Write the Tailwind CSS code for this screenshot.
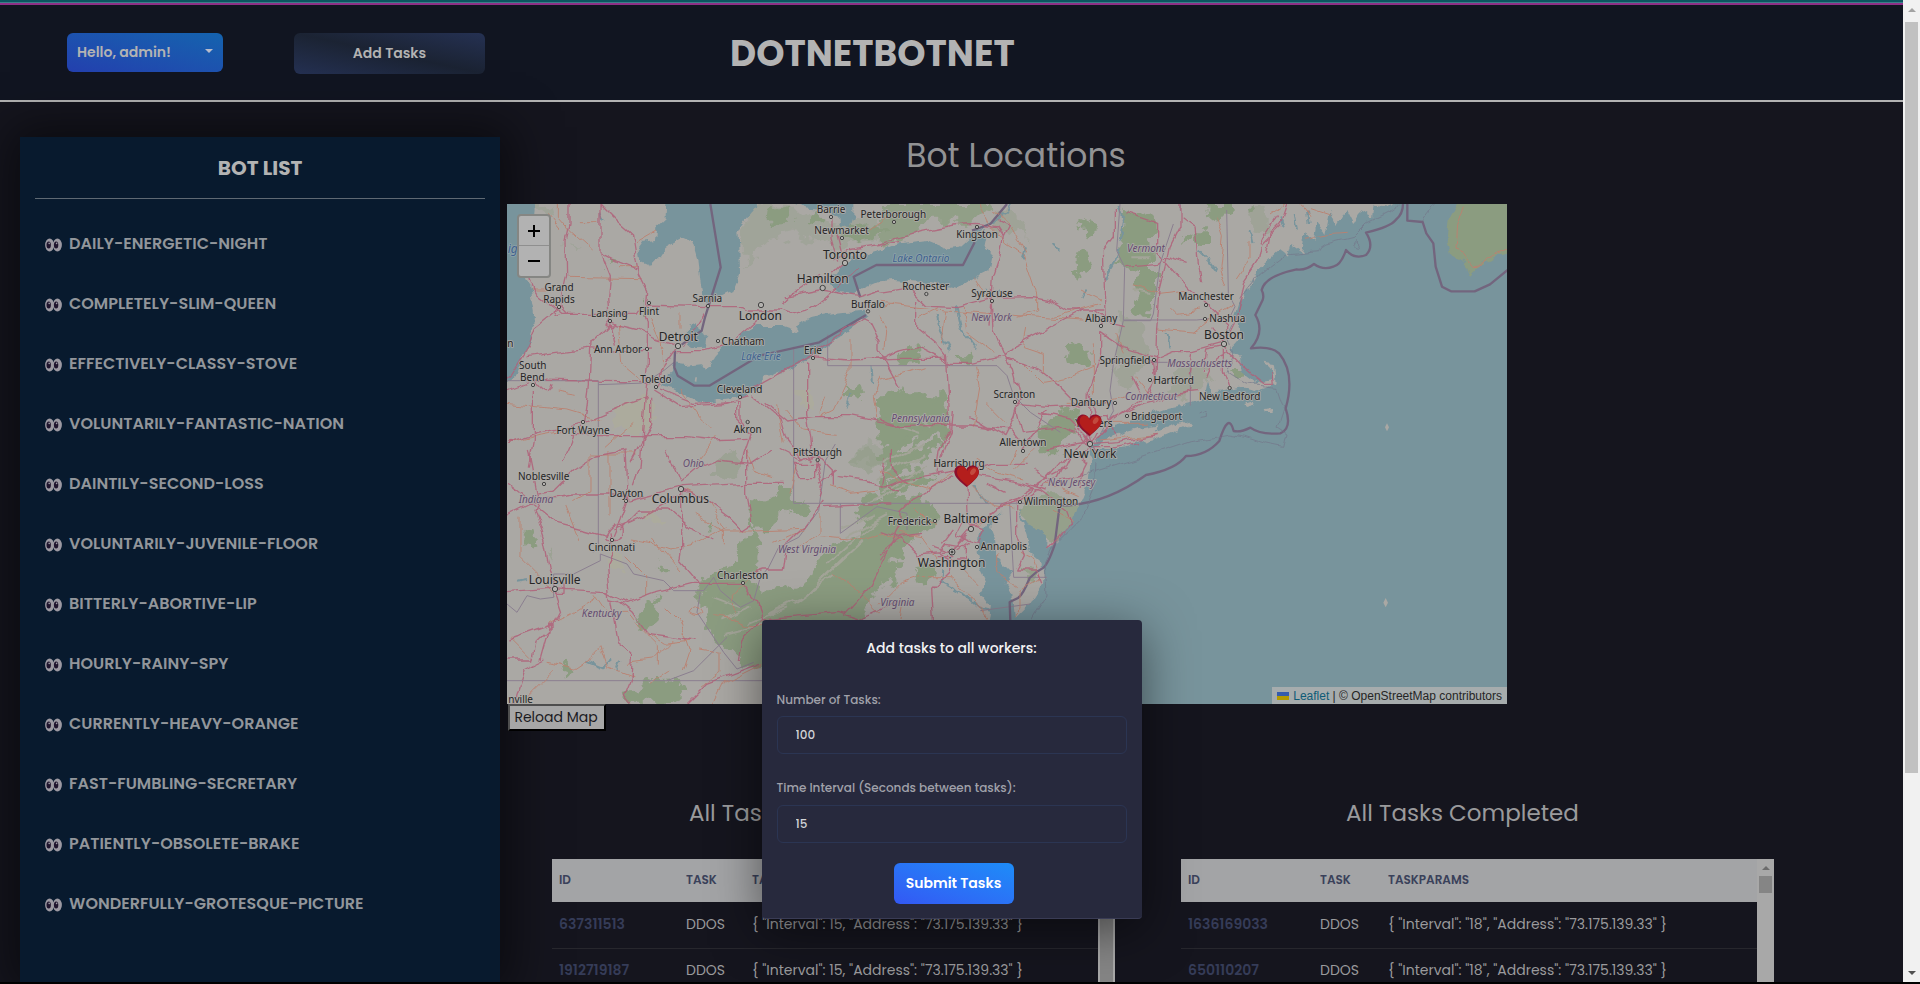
<!DOCTYPE html>
<html lang="en">
<head>
    <meta charset="UTF-8">
    <meta name="viewport" content="width=device-width, initial-scale=1.0">
    <title>DOTNETBOTNET</title>
    <script src="https://cdn.jsdelivr.net/npm/@tailwindcss/browser@4"></script>
</head>
<body class="h-screen flex flex-col overflow-hidden bg-black font-['Poppins','Inter',sans-serif] text-[#9a9a9c]">
    <div class="flex flex-1 min-h-0">
        <div class="relative flex flex-col flex-1 min-w-0 min-h-0 overflow-hidden bg-[#15151e]">
            <div class="h-[2px] shrink-0 bg-[#0b5560]"></div>
            <div class="h-px shrink-0 bg-[#3c7f88]"></div>
            <div class="h-[2px] shrink-0 bg-[#8f2f86]"></div>

            <header class="flex items-start shrink-0 h-[97px] pt-7 pl-[67px] bg-[#111521] border-b-2 border-[#b3b3b3]">
                <div class="relative">
                    <select id="userMenu" aria-label="User menu" class="appearance-none w-[156px] h-[39px] pl-[10px] pb-[2px] rounded-md text-sm font-semibold text-[#b3b3b3] bg-linear-to-bl from-[#1463ae] to-[#233fae]">
                        <option>Hello, admin!</option>
                    </select>
                    <svg class="absolute right-[10px] top-4 w-2 h-1 pointer-events-none" viewBox="0 0 8 4"><path d="M0 0h8L4 4z" fill="#b8bccb"/></svg>
                </div>
                <button id="addTasksBtn" class="ml-[71px] w-[191px] h-[41px] pb-[2px] rounded-md text-sm font-semibold text-[#b3b3b3] bg-linear-to-bl from-[#253153] via-[#1b2333] to-[#253153]">Add Tasks</button>
                <h1 class="ml-[245px] text-[36px] leading-[42px] font-bold text-[#b3b3b3]">DOTNETBOTNET</h1>
            </header>

            <div class="flex flex-1 min-h-0">
                <aside class="w-[25vw] shrink-0 mt-[35px] ml-5 px-[15px] bg-[#081a2e] shadow-[0_0_45px_10px_rgba(0,0,0,0.5)]">
                    <h2 class="h-[62px] pt-[17px] text-center text-xl leading-7 font-bold text-[#b3b3b3] border-b border-[#5f6973]">BOT LIST</h2>
                    <ul id="botList" class="pt-[15px] text-base font-semibold text-[#92969b]"></ul>
                </aside>

                <main class="flex-1 min-w-0 pl-[7px]">
                    <h2 class="w-[1018px] h-[102px] pt-[34px] text-center text-[33px] leading-10 text-[#929294]">Bot Locations</h2>

                    <div id="map" class="relative w-[1000px] h-[500px] overflow-hidden bg-[#aaa8a4]">
                        <svg class="w-full h-full font-['Noto_Sans',sans-serif]" viewBox="0 0 3000 1500" preserveAspectRatio="xMinYMin slice">
                            <defs>
                                <!-- breaks up straight edges so coast, woods and roads look surveyed -->
                                <filter id="rough" x="0" y="0" width="100%" height="100%" color-interpolation-filters="sRGB">
                                    <feTurbulence type="fractalNoise" baseFrequency=".02" numOctaves="4" seed="4"/>
                                    <feDisplacementMap in="SourceGraphic" scale="75" xChannelSelector="R" yChannelSelector="G"/>
                                </filter>
                                <filter id="coast" x="0" y="0" width="100%" height="100%" color-interpolation-filters="sRGB">
                                    <feTurbulence type="fractalNoise" baseFrequency=".03" numOctaves="3" seed="9"/>
                                    <feDisplacementMap in="SourceGraphic" scale="26" xChannelSelector="R" yChannelSelector="G"/>
                                </filter>
                                <filter id="wiggle" x="0" y="0" width="100%" height="100%" color-interpolation-filters="sRGB">
                                    <feTurbulence type="fractalNoise" baseFrequency=".015" numOctaves="3" seed="2"/>
                                    <feDisplacementMap in="SourceGraphic" scale="28" xChannelSelector="R" yChannelSelector="G"/>
                                </filter>
                            </defs>

                            <!-- woodland -->
                            <g fill="#8b9c80" filter="url(#rough)">
                                <path fill="none" d="M0 0h3000v1500H0z"/>
                                <g transform="translate(-21 -42)">
                                    <path d="M820 62l40-8 5 50-50 4zM930 80l40-14 10 30-30 20-20-5zM1030 130l70-30 60 10-30 30-70 20zM1035 585l50 5 10 30-60 5zM1130 640l50-30 160 0v130l-90 5-60 25-50-20zM305 212l30 4 25 12-40 6zM430 335l14 20-8 20z"/>
                                    <path opacity=".3" d="M720 110l60-60 110 0 120 50 90-30 40 20 0 60-140 20-120-40-80 20-70 70zM100 55l50-10 10 30-40 10zM190 160l50 10-10 20zM1040 800l60-40 80 10-60 60z"/>
                                </g>
                                <g transform="translate(1119 -42)">
                                    <path opacity=".8" d="M0 42h330l-60 50-110 0-60 40-100 30z"/>
                                    <path d="M0 622h60l10-30 20 30h110l10 60-50 40-120-10-20-30-20-5zM590 105l40-15 25 5-5 30-30 20-25-10zM575 210l25-20 40 15-10 30-30 22-25-20zM740 50l40 20 40 20 5 130 0 130-20 20-60-10 15-60 20-60-75-20 10-60zM910 130l30-10 0 30-30 15zM950 115h40v55l-20 5-20-20zM980 42h75v30l-70 10zM560 480l40-15 30 15-5 40-30 10-30-20zM500 690l50-40 40 20 0 50-60 70-50 0-10-60zM1100 60l20-10 5 20-20 10zM60 480l50-5 15 30-40 25-30-15zM230 495l40-5 15 25-30 10-20-10zM1050 540l30 0 10 20-20 10z"/>
                                    <path d="M0 800l40-50 60-15-60 65zM60 800l60-60 30-5-60 65zM110 800l50-45 40-10 0 20-60 35z"/>
                                    <path opacity=".35" d="M720 380l60 20 30 60-50 120-50 20-10-100zM900 520l60-10 40 60-80 60-50-40zM330 60l90 20 20 60-70-20zM1100 60l60-10 0 50-50 20z"/>
                                </g>
                                <g transform="translate(-21 738)">
                                    <path d="M755 150l90-30 35 0 10 30 30 0-10 35-50 10-40 30-60 10 30 30-15 50 0 50-35 10 60 50 60-10 60-20 40-60 20-50 110-20-20-60 30-60 110-10 60 20 50 50-60 50-90 90-100 180-200 90-30 40-100 0-60-60-40-40-30-60 0-100 35-30 60-30 20-60 30-30-10-50zM380 740l70-40 90-5 20 40-60 26h-110zM70 265l30-20 10 35-40 10zM395 520l60-70 30 30-10 50-50 10zM480 330l20 10 10 15-40 0zM620 235l20-15-5 25zM180 655l20-15 15 20-20 20zM740 610l120-80 20 60-90 60-50 10z"/>
                                    <path opacity=".45" d="M640 20l60-10 25 40-50 40-40-20zM130 300l20 0 10 30-20-10zM1040 20l60-20 60 20-60 50z"/>
                                </g>
                                <g transform="translate(1119 738)">
                                    <path d="M0 10l70-10 90 0-20 30-50 20-90 70zM0 180l40-20 90-10-60 60-70 60zM115 355l45-5 10 30-40 30zM0 330l30-10 30 30-20 60-40-10zM0 120l110-60 50 10-60 40-90 40z"/>
                                    <path opacity=".7" d="M435 160l60-15 90 0 25 20-20 60-60 60-90-60zM430 360l40-10 5 40-30 10z"/>
                                </g>
                            </g>
                            <!-- ridges through the Appalachians -->
                            <g fill="none" stroke="#a3a498" stroke-width="6" filter="url(#wiggle)">
                                <path stroke="none" d="M0 0h3000v1500H0z"/>
                                <path d="M1000 970l100-40M1010 1000l130-70M960 1080l150-130M940 1130l130-120M900 1170l110-110M860 1200l120-90M780 1230l100-50M720 1260l120-50M640 1250l90-40M1100 820l160-70M1130 860l130-80M1080 900l150-80M1130 780l120-60M620 1180l80 30M660 1290l110-30M1180 670l60 20M1230 640l40 30M1870 160l60 0M1880 260l50 10"/>
                            </g>
                            <g fill="#afaf98" opacity=".5" filter="url(#rough)">
                                <path d="M330 600l80-20 40 50-60 60-70-20zM410 930l40-20 20 40-40 10zM860 560l60 0 0 50-50 0zM300 1060l50-10 10 50-50 10z"/>
                            </g>

                            <!-- lakes and sea -->
                            <g filter="url(#coast)">
                                <g fill="#78949c">
                                    <path d="M-40 -40H84V0L80 60 62 140 54 208 72 258 84 330 81 380 60 440 30 508 0 535-40 545Z"/>
                                    <path d="M478 -40V0L476 43 449 68 444 108 409 113 392 138 397 173 429 188 459 158 479 128 524 103 559 118 574 168 579 218 587 288 604 300 629 283 679 258 699 208 697 128 694 78 724 38 754 0V-40Z"/>
                                    <path d="M544 368l25-10 20 30 12 10-4 30-38 2-20-17zM504 478l35 5 40-5 12 20 38-50 50-40 70-42h80l50 17-10-15 50-30 60-12 100-6 3 13-43 35-60 45-60 45-70 35-70 25-40 40-40 22-50 6-60 12-50-15-40-25-40-10 15-30 25-20z"/>
                                    <path d="M979 218L1009 183 1039 163 1119 140 1179 118 1259 108 1319 133 1359 128 1409 83 1440 75 1429 128 1454 148 1444 198 1409 216 1349 253 1309 243 1239 233 1159 228 1119 232 1059 258 1039 270 989 263 969 243Z"/>
                                    <path d="M864 -20V0l35 13 40 5 55 20 5 30 30 0 10-30V-20z"/>
                                    <path d="M2660 -40V0L2642 8 2600 2 2595 42 2560 22 2540 60 2520 20 2490 70 2470 20 2455 90 2430 50 2420 110 2395 88 2385 145 2350 120 2340 158 2316 138 2258 188 2225 248 2199 288 2184 338 2204 398 2169 438 2199 458 2204 503 2249 538 2299 528 2294 488 2269 473 2304 478 2309 538 2249 558 2199 548 2159 558 2119 568 2104 528 2094 578 2049 598 1979 613 1879 648 1819 663 1779 688 1749 743 1751 768 1744 838 1719 898 1689 958 1649 1008 1619 1038 1624 998 1559 958 1534 918 1559 998 1569 1048 1604 1078 1606 1138 1569 1198 1519 1248 1480 1540H3060V-40Z"/>
                                    <path d="M1489 923l-30 15-40 50-10 60 10 50 20 40-20 30 30 40-20 140h100l-10-180-20-30 20-30-50-50-5-50-15-40 30-40z"/>
                                </g>
                                <!-- Nova Scotia, Long Island, small islands -->
                                <path fill="#8b9c80" d="M2851 -40V0L2825 48 2819 98 2832 148 2864 163 2890 215 2929 173 2969 158 3040 138V-40z"/>
                                <path fill="#aaa8a4" d="M1755 735l50-35 90-25 60-12-20 20 110-35 10 12-110 45-90 25-90 10zM2270 615l30-3 0 12-26 0zM2209 600l30-10 8 14-30 8z"/>
                                <g fill="none" stroke="#78949c" stroke-width="6" stroke-linejoin="round">
                                    <path d="M1399 85l60-30 40-30 25-45M1289 328l10 60 30 50M1349 310l15 70 40 50M1790 230l30-50 20-50M1719 285l20-25M1834 0l14 50-10 60M1979 390l5 40M2100 160l30 40M2075 140l20 20M1309 1098l-5 40 60 30 60 50 40 10M1400 838l40 60M235 1370l50 20 30-20M330 1400l10-30M280 20l10 30M1020 610l10-40M1090 480l5 60M1440 260l60 5M1550 160l10-30M1640 120l20 20M2230 80l10 40M2320 40l10 30M30 1130l30-5M2360 30l10 50M2400 20l5 40"/>
                                </g>
                            </g>
                            <path fill="#aaa8a4" d="M2640 658l6 12-6 12-6-12zM2636 1182l7 14-7 14-7-14zM565 520l5 0-2 14-5-2z"/>

                            <!-- state and national borders -->
                            <g fill="none" stroke="#8b7f90" stroke-width="3">
                                <path d="M0 530h274v500l-15 15M274 542l140-5 60-40 30-25M860 428v470h700M962 392v93h508l30 30 20 60 50 50 90 60M1000 898v90l110-80 90 20 0 50"/>
                                <path d="M1839 0l-10 140 24 50-4 160-30 130-10 80 10 60M1849 348h220l100-10 15-30-20-40-5-250M2020 0l0 20M1999 60l-40 120-20 150-8 20h-80M1800 475h250v130M1508 900l12 220h100M1420 1220l150-20M1780 690l40-70"/>
                                <path d="M0 1200l30 25 30-50 40 10 40-5 0-70 60 0 80-40 0-20 80 30 20 30 90 20 30 30 90 0 30-40 20 40 60 50 40-20 20-70 25-30 30-60 60-30 60-80 20-150 30-50M580 1165l-10 60 80 120 40 50 50-20M0 1430h480l80-30 100-100M480 1430h290"/>
                            </g>
                            <g fill="none" stroke="#73657e" stroke-width="7" stroke-linejoin="round">
                                <path d="M610 0l31 190-47 150-10 40-60 42M504 440l-2 50 10 25 50 30h45l150-90 180-40 140-82M1060 280l-20-62 68-35h260l35-68M1395 80l55-20 50-60"/>
                                <path d="M2701 0v50l46 4 11 34 21 30 7 70 19 60 27 14h71l46-21 53-43"/>
                                <path d="M2688 0q0 30-22 48-15 20-89 38 26 40 0 67-34 15-60-15-15 45-38 50-30 12-58-8-25 20-52 16-95 20-105 62 8 15 3 30l-22 45q30 50-13 100 60-8 84 15 50 60 20 165 20 60-16 75-60 5-90-17-30 15-50 10-15-60-43 30-40 45-100 45-30 40-120 57-110 80-229 91h-30l-15 118q-20 60-35 70-20 10-40 30-20 50-35 60l-25 12 2 58-17 60-50 80"/>
                            </g>
                            <g fill="none" stroke="#74768a" stroke-width="2" filter="url(#wiggle)">
                                <path stroke="none" d="M0 0h3000v1500H0z"/>
                                <path d="M2680 0l-40 30-60 30-40 40-80 20-30 20-90 10-80 60-60 70-10 50-30 60 20 60-20 50 60 40 90 10 20 60-20 60 30 20-10 40-50-10-60-20-60-10-50 10-60 10-180 60-160 50M2747 54l40-54M2545 110q20 12 6 20-20-4-6-20M2075 630l20-10 0 20-20 4M1770 780l-5 60-40 100-80 80-30 60 5 90-60 100"/>
                            </g>

                            <!-- secondary roads -->
                            <g fill="none" stroke="#bb8170" stroke-width="3" stroke-linejoin="round" opacity=".9" filter="url(#wiggle)">
                                <path stroke="none" d="M0 0h3000v1500H0z"/>
                                <g transform="translate(-21 -42)">
                                    <path d="M175 42l0 40 35 40 65 58M235 92h60M205 262l220 4M360 230h50M145 70l40 50M95 300h60M355 400l10 120 60 50M540 370v40M455 390l40 90M490 460v80M1050 450l0 100-50 110-40 20M1140 380l20 40-5 60M21 640l180 20 100 30M170 600l60 10M650 740l-60 80M860 660l50 60 100 10M1140 560l-20 60 10 70M21 760l100-25 80-15M1110 120l50-40M320 770l80-70M830 640l20 120M465 120l-60 35M540 600l60 80 40 40M960 670l20-50"/>
                                </g>
                                <g transform="translate(1119 -42)">
                                    <path d="M300 42l30 60 50 60 50 30 20 60 20 60 0 50-60 20M340 60l40 40 60 90M0 340l200 20 250 20 160 10M280 260l30 50 20 20M0 360l40-20M120 380l60-30M250 350l10 80 80 60M200 360l-10 100M290 530l10 60-20 120M430 520l60 60 60-10 90-40M660 340l-140 40M760 290l80 20 80-10M870 350l20 20 70-10M710 430l20 60M1010 80l20 60-10 90 20 60M1110 150l0 60-40 60M640 460l0 160M600 300l60 30M830 420l120 10M560 640l80 0 100-20M700 700l100 0M0 570l80-20 60-20M320 640l60 60M1060 340l-60 40-60 50M440 420l-10 50 60 20 0 60M760 560l50 60M660 750l170-20"/>
                                    <path d="M1290 80l-20-30-40-20-60 45M1400 130l-60 5-60 10M1290 50l60 20"/>
                                    <path d="M1750 50l-20 60-5 70 30 10 30 40 15-2 20-30 60-20"/>
                                </g>
                                <g transform="translate(-21 738)">
                                    <path d="M270 15l0 110-50 30M270 12h140M330 0v200M60 200l0 120 60 60 40 60M200 170l40 100M390 270l60 10 60 20 60-10 110-60M380 320l60 60 0 60M150 520l60-30 80-50M285 430l40 60 60 0 30 40 60 60 0 60M500 470l40 40 30 90-20 60M430 540l60 40 90-10M600 600l60 10 0 60-60 40M640 500l60 10 40 20 80 0M460 270l80 90M560 120l60 30 50 80 0 50M590 190l80 50 90 0 150-5M820 280l90-40M380 640l80-10 60-60M240 650l60-60 20 60 80 30M450 700l60-40M960 190l0 60-60 40M960 260l120 10 60-20 60 20M1000 370l80 60 60 60M700 490l0-60 60-60M570 490q20-30 35 0-10 20-35 0M140 640l80 20 60-40M80 740l80-80M640 760l30-60 120-60M30 560l60 60M740 0l20 60 60 20M990 110l60 20 80-10M890 40l-20 90"/>
                                </g>
                                <g transform="translate(1119 738)">
                                    <path d="M150 120l80-60M0 60l60 30 90 30M280 110l60 60 60 10M290 30l60 40 80 20M60 250l60 10 60 80M0 460l60-60 60-20 90 0 60 50 60 80M350 310l0 60 60 40M240 350l60 60M420 310l40 20 20 60-60 30 0 60-20 30M500 100l90 40M520 180l60 30M400 60l60-60M340 200l-50 30M390 40l20-40M110 170l60 60M60 510l10-60"/>
                                </g>
                            </g>

                            <!-- motorways -->
                            <g fill="none" stroke="#b0627a" stroke-width="4" stroke-linejoin="round" opacity=".85" filter="url(#wiggle)">
                                <path stroke="none" d="M0 0h3000v1500H0z"/>
                                <g transform="translate(-21 -42)">
                                    <path d="M300 42l50 50 45 40 10 60 10 60 25 50-5 60 10 40 0 120-10 110-15 200-20 60M300 42l0 145 28 70-5 60 5 70 15 80M300 187l60 30 50 20M210 42l0 60-12 50 2 110-20 90-75 60-20 60-50 80-34 30M21 600l80-30 250 5 100 0M85 258l20 50 50 40 30 25h130l90 0 20-28 200 5 100 0 20 10 95 0 30 10 60-15 40-30 100-90M330 400l80 20 60 30 60 20M80 500l180-25 100 10 100-5M330 400l-60 60-5 100 0 30-15 110M550 470l60-100M533 485l80 0 80-20 80-70M535 470l-50 70-10 50M460 600l80 50 140-10 70-20M480 600l100 40 120-5M750 600l90-50 90-50 80-60 80-60 20 10 30 60 0 30 60 110M940 500l100 10 160-5 140 0M100 600l0 150-15 80M21 760l90-30 130-30 140-60 60-20M249 710l-30 30-30 70M210 740h350l80 10 100-5M449 620l0 90-60 110M710 630l0 60 40 40-30 90M760 620l80 60 20 70 50 60M800 640l60 50 80-10 110 0 150 30M920 520l0 150 20 130M860 320l100-20 60 10 60 10 60-20M1000 210l40-30 60-10 100-15M960 250l-80 60-30 30M1010 130l20 80M993 85l0 60 20 70M1030 220l-30 30M100 572q40 60 50 10"/>
                                    <path d="M175 350l-15 12 10 20 25-10zM315 400l10-14 20 10-8 14zM700 640l20 0 0 50 20 20"/>
                                </g>
                                <g transform="translate(1119 -42)">
                                    <path d="M0 160l120-35 100-20 70-5 60 10 20 30-10 60-20 60-5 80-5 70M370 140l15-30-30-15M0 310l90-15 50 50 90 5 110-28 120-2 50 10 50 30 80 0 60 40 40 10M337 340l5 80 30 75M110 330l0 80 60 50 30 40 10 220-30 60-10 80M0 510l50-25 60-15 100 50 60 0 100-20 30-30 210-110 60 0M370 500l30 40 20 80-15 60-30 60-110-60M370 505l60 15 50 20 60 50 60 60M410 640l100 10 110-5 60-10M410 645l20 80 100-15 60 20M665 410l10-40-5-190 30-40 0-90M665 430l0 60-40 120-5 150M665 430l60 40 100 30M730 230l100-10 30-20 60 20M740 70l90 30 0 80 30 40 10-50 30-60 0-70 80-30M860 220l-20 80-10 120-5 140-20 60M860 220l60 70 60 50 60 60 0 40M1035 460l-40-50M1035 455l30-60 30-120 40-60 10-50 60-60M905 80l40 30 10 110 10 50M820 510l60-25 60 0 90-25M935 490l-10 60M1030 470l-50 10-10 60M815 510l10 60-40 60-80 60-60 50M750 560l30 60 60-5 120-10M1030 470l60 60 60 50 30 0-5-40M1030 480l0 60 20 60M980 560q20-60 60-70M640 760l70-5 120-25M640 770l60 0 80-15M640 750l60-60 90-50 150-40M630 750l-60-60-90-20M500 660l-30 60-50 60M0 690l60 20 150-5 60 0 120 15 40 50M220 660l-5 60-30 80M500 780l90-20M560 760l60-10M610 730l40 60M590 720l40 60M650 720l-40 80M620 700l20 80M580 790l60-80M630 620l10 60 40 0 30 60"/>
                                    <path d="M1220 42l-20 60-30 30-10 60M1190 80l-40 60-10 20"/>
                                </g>
                                <g transform="translate(-21 738)">
                                    <path d="M21 100l90 70 60 50 80 20 70 20M21 195l90-45 110-15 170 0M85 0l30 150-10 30 30 90 15 80 15 60M110 130l50-10 60-60 70-45 90-15M330 250l10 60-20 40 10 100 50 10 80-30 120-30 150 0M340 260l20-50 20-60 0-40-5-110M340 240l90-40 110-60M360 240l60-60 90 0 70 60 60 30M385 150l160-40 200-10 100 0M545 120l0 180-5 30 60 70M500 0l40 100M540 100l60-50 50-20 100 10 60-40M545 120l60 20 80 60 40 40 30-20M21 425l120-10 180 10 60 30M165 420l20 60-20 40-140 50M165 520l-60 60-10 50-70 0M165 430l30 0 0-30-30-10zM335 455l20 120 40 30-5 80-20 50 20 26M350 450l50 40 40 60 150 20M730 400l40 50 15 60 120-10 110-10 60 20 130-60M785 510l-60 60-10 60M730 380l60-20 60 0 10-80 50-50 60-80M740 0l0 130 15 80M940 0l60 60 0 50M880 40l70 0 0 40-50 0zM950 30l20 80-10 30M560 760l60-60 160-60M840 0l60 30 60-20M970 170l110-5 100 0M1010 80l80 10 110 30M1200 230l-90 180-80 90M330 240q-30 40 10 30 30 10 30-30-10-30-40 0M120 630l30-110M40 760l30-100 60-30M910 0l30 30M960 100l50-40"/>
                                </g>
                                <g transform="translate(1119 738)">
                                    <path d="M0 110l60-20 60-10 120-20 60 20 120 20 60 20M15 30l-15 80M260 90l5 120M60 240l0-50 40-40 120-70M280 60l60-20 100 0M40 0l0 60 40 40M275 235l70-55 70-20 60-40 60-40 40-80M275 235l-60 70-100 10-50-50-60-20M215 305l-10 60-50 50 5 95M215 305l50-50M250 220l60 20-20 40-60-20zM200 280l50 10 0 40-40 0-30-20zM220 240l-30 40M230 300l40-30M300 220l60-50 60-20M410 170l0 90 20 60-20 40 60 0 15 40M405 160l80-60 80-90M440 100l60 20M480 120l80 60 15 40-70 80M540 90l60-10 20-40-40-30M500 80l60-30M430 130l80-50M0 310l60-50 60-10M170 320h50M0 330l20-30M160 290l60 20M600 120l10-60M460 60l60 30M320 100l60 30"/>
                                </g>
                            </g>

                            <!-- city dots -->
                            <g fill="#b3b1ae" stroke="#444" stroke-width="3">
                                <g transform="translate(-21 -42)">
                                    <circle cx="993" cy="81" r="5"/><circle cx="1182" cy="96" r="5"/><circle cx="1026" cy="144" r="5"/><circle cx="1035" cy="219" r="8"/><circle cx="968" cy="294" r="8"/><circle cx="177" cy="351" r="5"/><circle cx="330" cy="393" r="5"/><circle cx="447" cy="339" r="5"/><circle cx="624" cy="348" r="5"/><circle cx="783" cy="345" r="8"/><circle cx="1104" cy="364" r="5"/><circle cx="534" cy="468" r="8"/><circle cx="654" cy="453" r="5"/><circle cx="441" cy="477" r="5"/><circle cx="939" cy="504" r="5"/><circle cx="99" cy="585" r="5"/><circle cx="468" cy="591" r="5"/><circle cx="720" cy="621" r="5"/><circle cx="249" cy="696" r="5"/><circle cx="743" cy="696" r="5"/>
                                </g>
                                <g transform="translate(1119 -42)">
                                    <circle cx="291" cy="111" r="5"/><circle cx="139" cy="312" r="5"/><circle cx="336" cy="333" r="5"/><circle cx="663" cy="408" r="5"/><circle cx="978" cy="345" r="5"/><circle cx="975" cy="387" r="5"/><circle cx="1032" cy="462" r="8"/><circle cx="822" cy="510" r="5"/><circle cx="810" cy="570" r="5"/><circle cx="1049" cy="594" r="5"/><circle cx="405" cy="636" r="5"/><circle cx="705" cy="639" r="5"/><circle cx="741" cy="678" r="5"/><circle cx="429" cy="783" r="5"/><circle cx="630" cy="762" r="8"/>
                                </g>
                                <g transform="translate(-21 738)">
                                    <circle cx="132" cy="102" r="5"/><circle cx="378" cy="153" r="5"/><circle cx="543" cy="117" r="8"/><circle cx="336" cy="270" r="5"/><circle cx="165" cy="417" r="8"/><circle cx="729" cy="399" r="5"/><circle cx="953" cy="30" r="5"/>
                                </g>
                                <g transform="translate(1119 738)">
                                    <circle cx="165" cy="213" r="5"/><circle cx="273" cy="237" r="8"/><circle cx="420" cy="156" r="5"/><circle cx="291" cy="291" r="5"/><circle cx="216" cy="306" r="9"/><circle cx="216" cy="306" r="3" fill="#333"/>
                                </g>
                            </g>

                            <!-- place names -->
                            <g class="text-[30px] [paint-order:stroke]" text-anchor="middle" fill="#252525" stroke="#aeaca9" stroke-width="5" stroke-linejoin="round">
                                <g transform="translate(-21 -42)">
                                    <text x="993" y="69">Barrie</text><text x="1180" y="84">Peterborough</text><text x="1025" y="132">Newmarket</text>
                                    <text x="177" y="302">Grand</text><text x="177" y="338">Rapids</text><text x="328" y="381">Lansing</text><text x="447" y="374">Flint</text>
                                    <text x="622" y="336">Sarnia</text><text x="1104" y="353">Buffalo</text><text x="729" y="465">Chatham</text><text x="354" y="488">Ann Arbor</text>
                                    <text x="939" y="493">Erie</text><text x="98" y="538">South</text><text x="97" y="574">Bend</text><text x="468" y="580">Toledo</text>
                                    <text x="719" y="608">Cleveland</text><text x="249" y="731">Fort Wayne</text><text x="743" y="728">Akron</text><text x="952" y="798">Pittsburgh</text><text x="31" y="472">n</text>
                                    <g class="text-[36px]"><text x="1035" y="206">Toronto</text><text x="968" y="280">Hamilton</text><text x="781" y="390">London</text><text x="535" y="453">Detroit</text></g>
                                    <g class="italic" fill="#3f618f" stroke="#8ea3a9"><text x="783" y="510">Lake Erie</text><text class="text-[36px]" x="38" y="188">ig</text></g>
                                </g>
                                <g transform="translate(1119 -42)">
                                    <text x="291" y="145">Kingston</text><text x="137" y="301">Rochester</text><text x="336" y="321">Syracuse</text><text x="664" y="396">Albany</text>
                                    <text x="978" y="331">Manchester</text><text x="1042" y="397">Nashua</text><text x="735" y="521">Springfield</text><text x="881" y="582">Hartford</text>
                                    <text x="1049" y="629">New Bedford</text><text x="403" y="624">Scranton</text><text x="633" y="649">Danbury</text><text x="830" y="689">Bridgeport</text>
                                    <text x="642" y="711">Yonkers</text><text x="429" y="769">Allentown</text>
                                    <g class="text-[36px]"><text x="1032" y="448">Boston</text><text x="630" y="803">New York</text></g>
                                    <text class="italic" fill="#3f618f" stroke="#8ea3a9" x="123" y="216">Lake Ontario</text>
                                    <g class="italic" fill="#654c70"><text x="335" y="392">New York</text><text x="798" y="186">Vermont</text><text x="959" y="530">Massachusetts</text><text x="813" y="629">Connecticut</text><text x="121" y="697">Pennsylvania</text></g>
                                </g>
                                <g transform="translate(-21 738)">
                                    <text x="131" y="89">Noblesville</text><text x="379" y="140">Dayton</text><text x="335" y="304">Cincinnati</text><text x="728" y="388">Charleston</text><text x="62" y="758">nville</text>
                                    <g class="text-[36px]"><text x="541" y="159">Columbus</text><text x="164" y="402">Louisville</text></g>
                                    <g class="italic" fill="#654c70"><text x="108" y="158">Indiana</text><text x="580" y="50">Ohio</text><text x="305" y="501">Kentucky</text><text x="921" y="308">West Virginia</text></g>
                                </g>
                                <g transform="translate(1119 738)">
                                    <text x="237" y="50">Harrisburg</text><text x="88" y="224">Frederick</text><text x="513" y="166">Wilmington</text><text x="371" y="301">Annapolis</text>
                                    <g class="text-[36px]"><text x="273" y="220">Baltimore</text><text x="215" y="351">Washington</text></g>
                                    <g class="italic" fill="#654c70"><text x="575" y="108">New Jersey</text><text x="52" y="469">Virginia</text></g>
                                </g>
                            </g>

                            <!-- bot markers -->
                            <defs>
                                <g id="heart">
                                    <path fill="#8d0f2c" d="M0 32C-20 16-37 2-37-13c0-22 28-26 36-7 8-19 38-15 38 7C37 2 18 18 0 32z"/>
                                    <path fill="#b41e1c" d="M3 28C-14 14-29 2-29-12c0-20 22-24 31-4 8-18 34-16 34 4C36 3 19 15 3 28z"/>
                                    <ellipse cx="19" cy="-14" rx="7" ry="11" fill="#c24a3e" transform="rotate(35 19 -14)"/>
                                </g>
                            </defs>
                            <use href="#heart" x="1747" y="664"/>
                            <use href="#heart" x="1379" y="817"/>
                        </svg>

                        <div class="absolute left-[10px] top-[10px] flex flex-col w-[34px] rounded border-2 border-[#858683] bg-[#b2b2b2] text-black">
                            <button aria-label="Zoom in" class="flex items-center justify-center h-[30px] border-b border-[#8f8f8f]"><svg class="w-3 h-3" viewBox="0 0 12 12"><path d="M6 0v12M0 6h12" stroke="#000" stroke-width="2"/></svg></button>
                            <button aria-label="Zoom out" class="flex items-center justify-center h-[30px]"><svg class="w-3 h-3" viewBox="0 0 12 12"><path d="M0 6h12" stroke="#000" stroke-width="2"/></svg></button>
                        </div>

                        <div class="absolute right-0 bottom-0 flex items-center gap-1 h-[17px] px-[5px] bg-[#a6acad] font-['Liberation_Sans',sans-serif] text-xs leading-4 text-[#252525]">
                            <svg class="w-3 h-2" viewBox="0 0 12 8"><path fill="#355cac" d="M0 0h12v4H0z"/><path fill="#b49a00" d="M0 4h12v4H0z"/></svg>
                            <span><a href="#" class="text-[#0e5b77]">Leaflet</a> | © OpenStreetMap contributors</span>
                        </div>
                    </div>

                    <button id="reloadMap" class="block h-[27px] w-[98px] pr-[2px] pb-[2px] ml-px border-2 border-t-[#4e4e4e] border-l-[#4e4e4e] border-r-black border-b-black bg-[#a7a7a7] text-sm leading-5 text-[#1b1b1f]">Reload Map</button>

                    <div class="flex gap-[66px] pl-[45px] mt-[65px]">
                        <section class="w-[563px]">
                            <h3 class="h-[63px] pt-px pr-[30px] text-center text-[23px] leading-8">All Tasks Uncompleted</h3>
                            <div class="flex h-[260px] overflow-hidden">
                                <table class="flex-1 self-start table-fixed text-left text-sm [&_th]:pb-[2px] [&_td]:pb-[2px]" id="uncompleted">
                                    <thead class="h-[43px] bg-[#a3a4a6] text-[12px] text-[#3a415a]">
                                        <tr><th class="w-[134px] pl-[7px] font-semibold">ID</th><th class="w-[66px] font-semibold">TASK</th><th class="w-[346px] font-semibold">TASKPARAMS</th></tr>
                                    </thead>
                                    <tbody>
                                        <tr class="h-[46px] border-b border-[#27272d]"><td class="pl-[7px] font-semibold text-[#353c58]">637311513</td><td>DDOS</td><td>{ "Interval": 15, "Address": "73.175.139.33" }</td></tr>
                                        <tr class="h-[46px] border-b border-[#27272d]"><td class="pl-[7px] font-semibold text-[#353c58]">1912719187</td><td>DDOS</td><td>{ "Interval": 15, "Address": "73.175.139.33" }</td></tr>
                                    </tbody>
                                </table>
                                <div class="w-[17px] shrink-0 px-[2px] bg-[#a8a8a8]"><div class="h-full bg-[#858585]"></div></div>
                            </div>
                        </section>
                        <section class="w-[593px]">
                            <h3 class="h-[63px] pt-px pr-[30px] text-center text-[23px] leading-8">All Tasks Completed</h3>
                            <div class="flex h-[260px] overflow-hidden">
                                <table class="flex-1 self-start table-fixed text-left text-sm [&_th]:pb-[2px] [&_td]:pb-[2px]" id="completed">
                                    <thead class="h-[43px] bg-[#a3a4a6] text-[12px] text-[#3a415a]">
                                        <tr><th class="w-[139px] pl-[7px] font-semibold">ID</th><th class="w-[68px] font-semibold">TASK</th><th class="w-[369px] font-semibold">TASKPARAMS</th></tr>
                                    </thead>
                                    <tbody>
                                        <tr class="h-[46px] border-b border-[#27272d]"><td class="pl-[7px] font-semibold text-[#353c58]">1636169033</td><td>DDOS</td><td>{ "Interval": "18", "Address": "73.175.139.33" }</td></tr>
                                        <tr class="h-[46px] border-b border-[#27272d]"><td class="pl-[7px] font-semibold text-[#353c58]">650110207</td><td>DDOS</td><td>{ "Interval": "18", "Address": "73.175.139.33" }</td></tr>
                                    </tbody>
                                </table>
                                <div class="w-[17px] shrink-0 px-[2px] pt-[7px] bg-[#a8a8a8]">
                                    <svg class="w-2 h-1 mx-auto mb-[6px]" viewBox="0 0 8 4"><path d="M4 0l4 4H0z" fill="#6c6c6c"/></svg>
                                    <div class="h-[17px] bg-[#858585]"></div>
                                </div>
                            </div>
                        </section>
                    </div>
                </main>
            </div>

            <form id="taskModal" class="absolute left-1/2 top-[620px] -translate-x-1/2 w-[380px] h-[299px] px-[15px] rounded-[4px] border-b border-[#3a3c55] bg-[#27293d] shadow-[0_10px_50px_0_rgba(0,0,0,0.5)]">
                <h4 class="pt-[18px] h-[70px] text-center text-sm leading-5 font-medium text-[#f2f2f4]">Add tasks to all workers:</h4>
                <label for="numTasks" class="block h-[26px] text-xs leading-5 font-medium text-[#a0a1aa]">Number of Tasks:</label>
                <input id="numTasks" type="text" value="100" class="block w-full h-[38px] px-[18px] rounded-md border border-[#2b3553] bg-transparent text-xs font-medium text-[#d2d3d7]">
                <label for="interval" class="block h-[51px] pt-6 text-xs leading-5 font-medium text-[#a0a1aa]">Time Interval (Seconds between tasks):</label>
                <input id="interval" type="text" value="15" class="block w-full h-[38px] px-[18px] rounded-md border border-[#2b3553] bg-transparent text-xs font-medium text-[#d2d3d7]">
                <button type="button" class="block ml-[117px] mt-5 w-[120px] h-[41px] pb-[2px] rounded-md text-sm font-semibold text-white bg-linear-to-bl from-[#1d8cf8] to-[#3358f4]">Submit Tasks</button>
            </form>
        </div>

        <div class="flex flex-col items-center w-[17px] shrink-0 py-[7px] bg-[#f1f1f1]">
            <svg class="w-2 h-1 shrink-0 mt-px" viewBox="0 0 8 4"><path d="M4 0l4 4H0z" fill="#a3a3a3"/></svg>
            <div class="mt-[10px] w-[13px] h-[751px] bg-[#c1c1c1]"></div>
            <svg class="w-2 h-1 shrink-0 mt-auto" viewBox="0 0 8 4"><path d="M0 0h8L4 4z" fill="#505050"/></svg>
        </div>
    </div>
    <div class="h-[2px] shrink-0 bg-black"></div>

    <svg class="hidden">
        <symbol id="eyes" viewBox="0 0 17 14">
            <ellipse cx="4.6" cy="7" rx="4.5" ry="6.5" fill="#9c99a2"/>
            <ellipse cx="12.4" cy="7" rx="4.5" ry="6.5" fill="#9c99a2"/>
            <ellipse cx="3.7" cy="7" rx="2.2" ry="3.5" fill="#20152e"/>
            <ellipse cx="11.1" cy="7" rx="2.2" ry="3.5" fill="#20152e"/>
            <circle cx="4.2" cy="5.4" r=".8" fill="#9c99a2"/>
            <circle cx="11.6" cy="5.4" r=".8" fill="#9c99a2"/>
        </symbol>
    </svg>
    <script>
        const bots = [
            'DAILY-ENERGETIC-NIGHT', 'COMPLETELY-SLIM-QUEEN', 'EFFECTIVELY-CLASSY-STOVE', 'VOLUNTARILY-FANTASTIC-NATION',
            'DAINTILY-SECOND-LOSS', 'VOLUNTARILY-JUVENILE-FLOOR', 'BITTERLY-ABORTIVE-LIP', 'HOURLY-RAINY-SPY',
            'CURRENTLY-HEAVY-ORANGE', 'FAST-FUMBLING-SECRETARY', 'PATIENTLY-OBSOLETE-BRAKE', 'WONDERFULLY-GROTESQUE-PICTURE'
        ];
        document.getElementById('botList').innerHTML = bots.map(name => `
            <li class="h-[60px] pl-[10px]"><a href="#" class="flex items-center gap-[7px] h-[60px]"><svg class="w-[17px] h-[14px] mt-[2px]"><use href="#eyes"/></svg>${name}</a></li>`).join('');
    </script>
</body>
</html>
